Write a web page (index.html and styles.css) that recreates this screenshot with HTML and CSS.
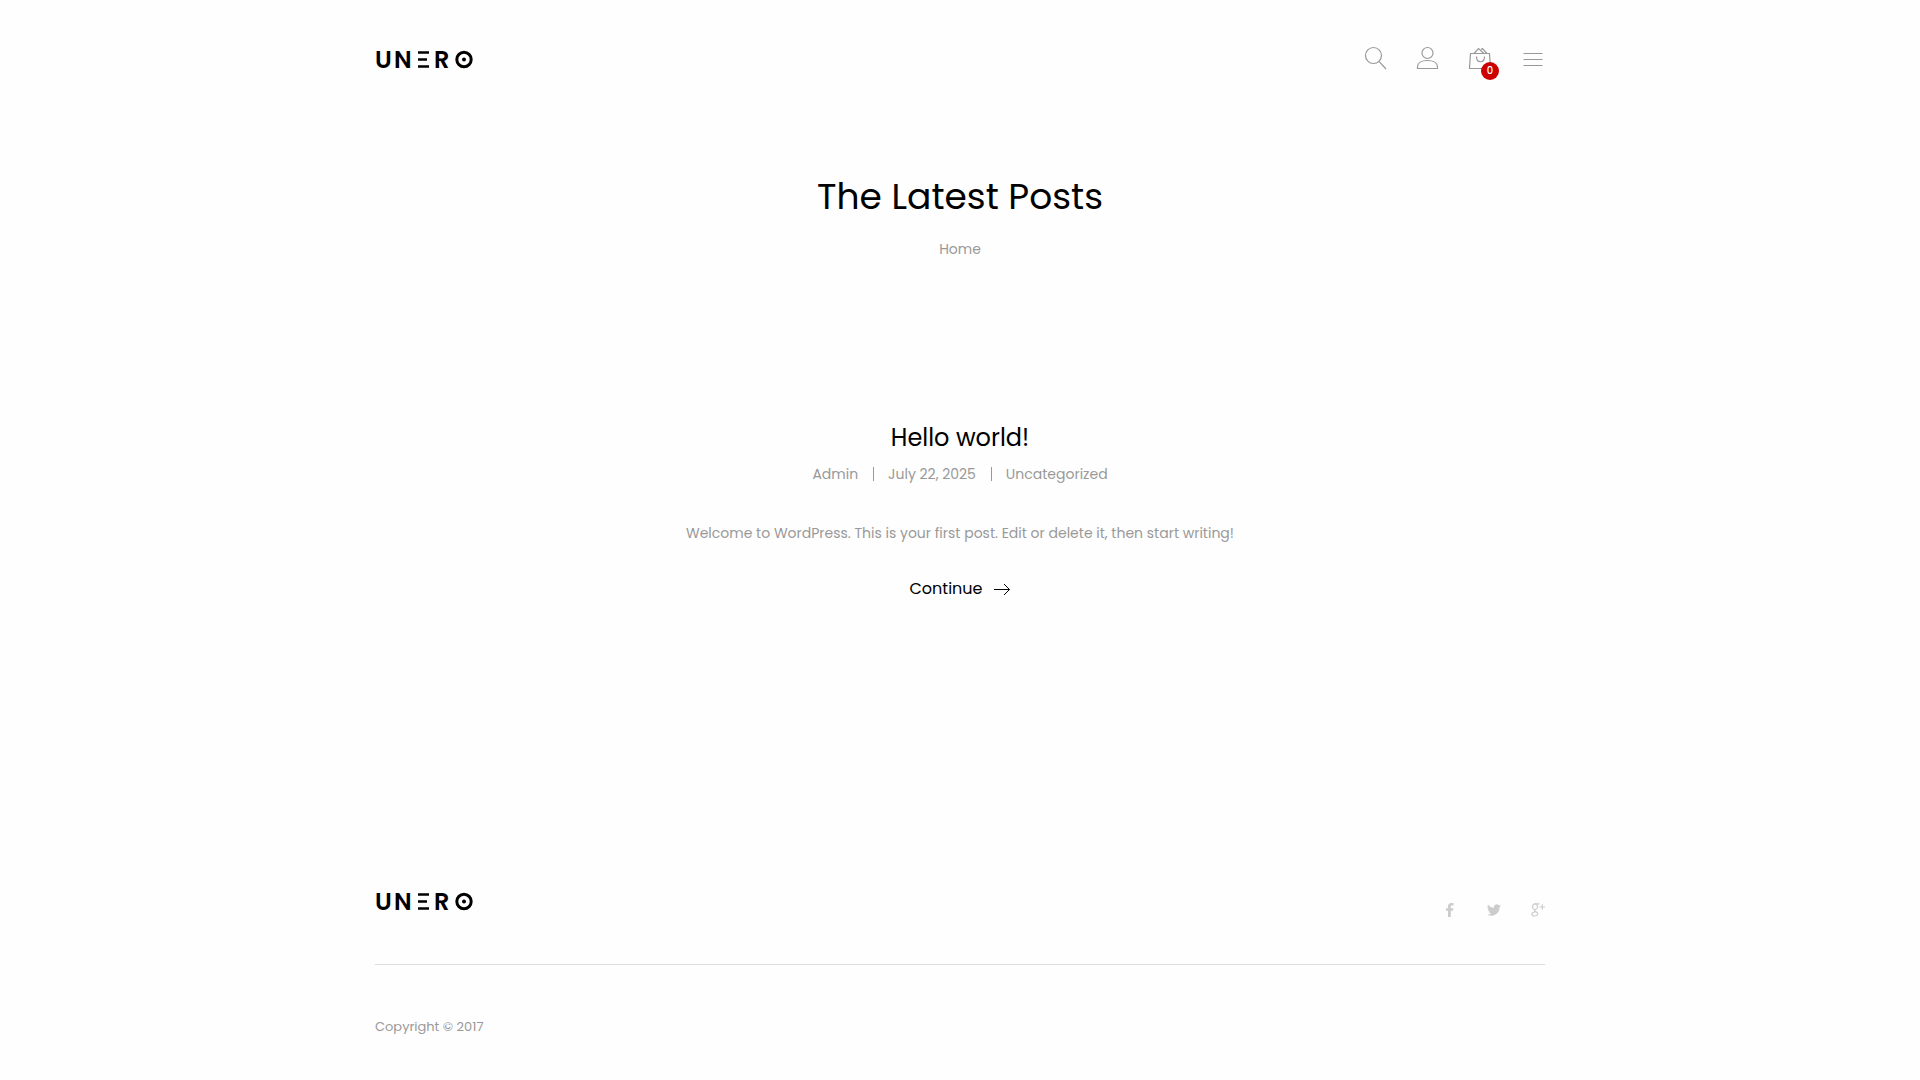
FILE: index.html
```html
<!DOCTYPE html>
<html lang="en">
<head>
  <meta charset="UTF-8" />
  <meta name="viewport" content="width=device-width, initial-scale=1.0" />
  <title>The Latest Posts</title>
  <link rel="stylesheet" href="styles.css">
</head>
<body>
  <header class="site-header container">
    <a href="#" class="logo" aria-label="Unero">
      <svg width="98" height="38" viewBox="0 -9 98 38">
        <text x="0" y="18">U</text>
        <text x="19" y="18">N</text>
        <path d="M43 2.5h11M43 9.5h9M43 16.5h11" />
        <text x="59" y="18">R</text>
        <circle class="ring" cx="89" cy="9.5" r="7.2" />
        <circle cx="89" cy="9.5" r="2" />
      </svg>
    </a>
    <nav class="header-tools">
      <a href="#" aria-label="Search">
        <svg class="icon" width="22" height="22" viewBox="0 0 22 22"><circle cx="9.500" cy="8.5" r="8" /><path d="M15 14.300L22 22" /></svg>
      </a>
      <a href="#" aria-label="Account">
        <svg class="icon" width="22" height="22" viewBox="0 0 22 22"><circle cx="10.500" cy="6" r="5.5" /><path d="M.5 21.500V20c0-4 4-6.500 10-6.500s10 2.500 10 6.500v1.500z" /></svg>
      </a>
      <a href="#" class="cart" aria-label="Cart">
        <svg class="icon" width="22" height="22" viewBox="0 0 22 22"><path d="M.5 6.500h19l1 15H-.5zM4 6.500L8.500 1.500l5.500 5M11 2.500l1.500-1 4.500 5M6.500 9.500c0 7 8 7 8 0" /></svg>
        <span class="badge">0</span>
      </a>
      <button class="menu-toggle" type="button" aria-label="Menu">
        <svg class="icon" width="22" height="22" viewBox="0 0 22 22"><path d="M.5 6.500h19M.5 12.500h19M.5 18.500h19" /></svg>
      </button>
    </nav>
  </header>

  <section class="page-header">
    <h1>The Latest Posts</h1>
    <a href="#">Home</a>
  </section>

  <main class="container">
    <article class="post">
      <h2><a href="#">Hello world!</a></h2>
      <div class="post-meta">
        <a href="#">Admin</a>
        <a href="#">July 22, 2025</a>
        <a href="#">Uncategorized</a>
      </div>
      <p>Welcome to WordPress. This is your first post. Edit or delete it, then start writing!</p>
      <a href="#" class="read-more">Continue
        <svg width="18" height="14" viewBox="0 0 18 14"><path d="M1 7.500h15.500M11 2l5.500 5.500L11 13" /></svg>
      </a>
    </article>
  </main>

  <footer class="site-footer container">
    <div class="footer-top">
      <a href="#" class="logo" aria-label="Unero">
        <svg width="98" height="38" viewBox="0 -9 98 38">
          <text x="0" y="18">U</text>
          <text x="19" y="18">N</text>
          <path d="M43 2.5h11M43 9.5h9M43 16.5h11" />
          <text x="59" y="18">R</text>
          <circle class="ring" cx="89" cy="9.5" r="7.2" />
          <circle cx="89" cy="9.5" r="2" />
        </svg>
      </a>
      <nav class="socials">
        <a href="#" aria-label="Facebook">
          <svg width="14" height="14" viewBox="0 0 14 14"><path d="M5 14V7.700H3V5.200h2V3.500C5 1.200 6.200 0 8.300 0H10.500v2.500H9C8.100 2.500 7.800 2.900 7.800 3.600v1.600h2.600l-.4 2.500H7.800V14z" /></svg>
        </a>
        <a href="#" aria-label="Twitter">
          <svg width="14" height="14" viewBox="0 0 24 24"><path d="M24 4.600a10 10 0 0 1-2.800.8 5 5 0 0 0 2.100-2.700 10 10 0 0 1-3.100 1.200 4.900 4.900 0 0 0-8.400 4.500A14 14 0 0 1 1.700 3.200a4.900 4.900 0 0 0 1.500 6.500A5 5 0 0 1 1 9.100a4.900 4.900 0 0 0 3.900 4.900 5 5 0 0 1-2.200.1 4.900 4.900 0 0 0 4.600 3.400A10 10 0 0 1 0 19.500 14 14 0 0 0 21.500 7.100 10 10 0 0 0 24 4.600z" /></svg>
        </a>
        <a href="#" aria-label="Google Plus">
          <svg class="line" width="14" height="14" viewBox="0 0 14 14"><ellipse cx="4" cy="3.700" rx="2.500" ry="2.800" /><path d="M4 .8h4.500M4.500 6.500c-1.500 1-1 1.500 0 2 3.500 1.500 2.500 4.500-1 4.500S-.5 9.500 4.500 8.600M8.500 4H14M11.300 1.200v5.600" /></svg>
        </a>
      </nav>
    </div>
    <p class="copyright">Copyright © 2017</p>
  </footer>
</body>
</html>
```

FILE: styles.css
```css
* {
  box-sizing: border-box;
}
body {
  margin: 0;
  font-family: Poppins, Inter, sans-serif;
  font-size: 14px;
  line-height: 24px;
  color: #999;
  background: #fefefe;
}
a {
  color: inherit;
  text-decoration: none;
}
h1, h2, p {
  margin: 0;
  font-weight: 400;
}
svg {
  display: block;
}
.container {
  width: 100%;
  max-width: 1200px;
  margin: 0 auto;
  padding: 0 15px;
}
.logo svg {
  overflow: visible;
}
.logo text {
  font-family: Poppins, Lato, sans-serif;
  font-size: 24px;
  font-weight: 600;
}
.logo path, .logo .ring {
  fill: none;
  stroke: #000;
  stroke-width: 3;
}
.logo path {
  stroke-width: 2.5;
}

/* header */
.site-header {
  display: flex;
  align-items: center;
  justify-content: space-between;
  height: 120px;
}
.header-tools {
  display: flex;
  align-items: center;
  gap: 31px;
  padding-bottom: 4px;
}
.icon {
  fill: none;
  stroke: #999;
  stroke-width: 1.2;
  overflow: visible;
}
.cart {
  position: relative;
}
.badge {
  position: absolute;
  top: 15px;
  left: 11px;
  width: 18px;
  height: 18px;
  border-radius: 50%;
  background: #c00;
  color: #fff;
  font-size: 10px;
  font-weight: 500;
  line-height: 18px;
  text-align: center;
}
.menu-toggle {
  padding: 0;
  border: 0;
  background: none;
  cursor: pointer;
}

.page-header {
  padding: 53px 15px 0;
  text-align: center;
}
.page-header h1 {
  margin-bottom: 16px;
  color: #000;
  font-size: 36px;
  line-height: 48px;
}

/* posts */
.post {
  padding: 161px 0 282px;
  text-align: center;
}
.post h2 {
  margin-bottom: 8px;
  color: #000;
  font-size: 24px;
  line-height: 32px;
}
.post-meta {
  display: flex;
  align-items: center;
  justify-content: center;
  margin-bottom: 35px;
}
.post-meta a + a {
  display: flex;
  align-items: center;
}
.post-meta a + a::before {
  content: "";
  width: 1px;
  height: 14px;
  margin: 0 14px 0 15px;
  background: #999;
}
.post p {
  margin-bottom: 32px;
}
.read-more {
  display: inline-flex;
  align-items: center;
  gap: 10px;
  color: #000;
  font-size: 16px;
}
.read-more svg {
  fill: none;
  stroke: #000;
}

/* footer */
.footer-top {
  display: flex;
  align-items: flex-start;
  justify-content: space-between;
  padding-bottom: 43px;
  border-bottom: 1px solid #ddd;
}
.socials {
  display: flex;
  gap: 30px;
  padding-top: 20px;
}
.socials svg {
  fill: #ccc;
}
.socials .line {
  fill: none;
  stroke: #ccc;
  stroke-width: 1.2;
}
.copyright {
  padding: 50px 0 42px;
  font-size: 13px;
}
```
